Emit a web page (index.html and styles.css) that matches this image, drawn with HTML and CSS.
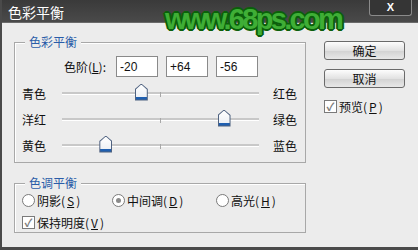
FILE: index.html
```html
<!DOCTYPE html>
<html lang="zh">
<head>
  <meta charset="UTF-8">
  <title>色彩平衡</title>
  <link rel="stylesheet" href="styles.css">
</head>
<body>
  <div class="window">
    <div class="titlebar">
      <span class="title">色彩平衡</span>
      <span class="close">X</span>
    </div>
    <div class="watermark">www.68ps.com</div>

    <div class="content">
      <div class="groups">
        <!-- 色彩平衡 -->
        <div class="group balance">
          <span class="legend">色彩平衡</span>
          <div class="levels">
            <label class="levels-label">色阶(<u>L</u>):</label>
            <input type="text" class="level" value="-20">
            <input type="text" class="level" value="+64">
            <input type="text" class="level" value="-56">
          </div>
          <div class="slider-row">
            <span class="side-label">青色</span>
            <div class="track"><span class="tick"></span><span class="thumb" style="left: 40%"></span></div>
            <span class="side-label right">红色</span>
          </div>
          <div class="slider-row">
            <span class="side-label">洋红</span>
            <div class="track"><span class="tick"></span><span class="thumb" style="left: 82%"></span></div>
            <span class="side-label right">绿色</span>
          </div>
          <div class="slider-row">
            <span class="side-label">黄色</span>
            <div class="track"><span class="tick"></span><span class="thumb" style="left: 22%"></span></div>
            <span class="side-label right">蓝色</span>
          </div>
        </div>

        <!-- 色调平衡 -->
        <div class="group tone">
          <span class="legend">色调平衡</span>
          <div class="radio-row">
            <span class="option shadow"><span class="radio"></span>阴影(<u>S</u>)</span>
            <span class="option mid"><span class="radio checked"></span>中间调(<u>D</u>)</span>
            <span class="option"><span class="radio"></span>高光(<u>H</u>)</span>
          </div>
          <div class="check-row">
            <span class="checkbox">&#10003;</span>保持明度(<u>V</u>)
          </div>
        </div>
      </div>

      <div class="actions">
        <button class="btn">确定</button>
        <button class="btn">取消</button>
        <div class="preview"><span class="checkbox">&#10003;</span>预览(<u>P</u>)</div>
      </div>
    </div>
  </div>
</body>
</html>
```

FILE: styles.css
```css
body {
  margin: 0;
  font-family: "Noto Sans CJK SC", "Liberation Sans", sans-serif;
  font-size: 12px;
  color: #111;
}
.window {
  width: 418px;
  height: 250px;
  box-sizing: border-box;
  background: #ececec;
  border-left: 2px solid #4a4a4a;
  border-bottom: 3px solid #4a4a4a;
  position: relative;
  overflow: hidden;
}
.titlebar {
  height: 22px;
  margin-left: -2px;
  background: linear-gradient(#3a3a3a, #4a4a4a);
  border-bottom: 1px solid #6a6a6a;
  display: flex;
  align-items: center;
  position: relative;
}
.title {
  color: #fff;
  font-size: 14px;
  margin-left: 8px;
  margin-top: 1px;
}
.close {
  position: absolute;
  right: 6px;
  top: 0;
  width: 43px;
  height: 16px;
  box-sizing: border-box;
  border: 1px solid #8a8a8a;
  border-top: none;
  border-radius: 0 0 3px 3px;
  background: #353535;
  color: #fff;
  font-family: "Liberation Sans", sans-serif;
  font-weight: bold;
  font-size: 11px;
  text-align: center;
  line-height: 14px;
}
.watermark {
  position: absolute;
  left: 163px;
  top: 3px;
  font-family: "Liberation Sans", Arial, sans-serif;
  font-weight: bold;
  font-size: 29px;
  letter-spacing: -2.7px;
  color: #3fae36;
  text-shadow: 2px 0 0 #0b5f0b, -2px 0 0 #0b5f0b, 0 2px 0 #0b5f0b, 0 -2px 0 #0b5f0b,
    1px 1px 0 #0b5f0b, -1px -1px 0 #0b5f0b, 1px -1px 0 #0b5f0b, -1px 1px 0 #0b5f0b;
}
.content {
  display: flex;
}
.groups {
  margin-left: 12px;
  width: 292px;
  flex-shrink: 0;
}
.group {
  position: relative;
  border: 1px solid #a8a8a8;
  box-shadow: inset 1px 1px 0 #fff;
  padding: 0 7px;
}
.legend {
  position: absolute;
  left: 10px;
  top: -9px;
  padding: 0 4px;
  background: #ececec;
  color: #2a5ca8;
  line-height: 16px;
}
.balance {
  margin-top: 19px;
  height: 119px;
}
.levels {
  display: flex;
  align-items: center;
  gap: 8px;
  margin-top: 13px;
  margin-bottom: 3px;
  height: 21px;
}
.levels-label {
  width: 86px;
  text-align: right;
  padding-right: 2px;
  box-sizing: border-box;
}
.level {
  width: 42px;
  height: 21px;
  box-sizing: border-box;
  border: 1px solid #8a8a8a;
  font-family: "Liberation Sans", sans-serif;
  font-size: 12px;
  padding: 0 3px;
  color: #111;
  background: #fff;
}
.slider-row {
  display: flex;
  align-items: center;
  height: 26px;
}
.side-label {
  width: 40px;
  flex-shrink: 0;
}
.side-label.right {
  width: auto;
  margin-left: 14px;
}
.track {
  width: 197px;
  flex-shrink: 0;
  height: 2px;
  background: #c8c8c8;
  border-bottom: 1px solid #fff;
  position: relative;
}
.tick {
  position: absolute;
  left: 98px;
  top: 0;
  width: 1px;
  height: 5px;
  background: #a8a8a8;
}
.thumb {
  position: absolute;
  top: -8px;
  width: 13px;
  height: 17px;
  margin-left: -6px;
}
.thumb::before {
  content: "";
  position: absolute;
  inset: 0;
  background: #4f6280;
  clip-path: polygon(50% 0, 100% 32%, 100% 100%, 0 100%, 0 32%);
}
.thumb::after {
  content: "";
  position: absolute;
  inset: 1px;
  background: linear-gradient(#fff 0, #eef1f5 78%, #1f5fb0 78%, #1f5fb0 100%);
  clip-path: polygon(50% 0, 100% 34%, 100% 100%, 0 100%, 0 34%);
}
.tone {
  margin-top: 20px;
  height: 48px;
}
.radio-row {
  display: flex;
  align-items: center;
  margin-top: 8px;
  height: 16px;
}
.option {
  display: flex;
  align-items: center;
  gap: 2px;
}
.option.shadow {
  width: 90px;
}
.option.mid {
  width: 104px;
}
.radio {
  width: 11px;
  height: 11px;
  border: 1px solid #7a7a7a;
  border-radius: 50%;
  background: #fff;
  position: relative;
}
.radio.checked::after {
  content: "";
  position: absolute;
  left: 3px;
  top: 3px;
  width: 5px;
  height: 5px;
  border-radius: 50%;
  background: #8a8a8a;
}
.check-row, .preview {
  display: flex;
  align-items: center;
  gap: 2px;
  margin-top: 6px;
}
.checkbox {
  width: 11px;
  height: 11px;
  border: 1px solid #7a7a7a;
  background: #fff;
  color: #7a7a7a;
  font-size: 11px;
  line-height: 11px;
  text-align: center;
  font-weight: bold;
}
.actions {
  margin-left: 18px;
  margin-top: 18px;
  display: flex;
  flex-direction: column;
  gap: 9px;
}
.btn {
  width: 81px;
  height: 19px;
  border: 1px solid #6a6a6a;
  border-radius: 3px;
  background: linear-gradient(#fdfdfd, #e2e2e2 50%, #d2d2d2 51%, #e8e8e8);
  font-family: "Noto Sans CJK SC", sans-serif;
  font-size: 12px;
  line-height: 15px;
  padding: 0;
  color: #111;
}
.preview {
  margin-top: 1px;
}
```
